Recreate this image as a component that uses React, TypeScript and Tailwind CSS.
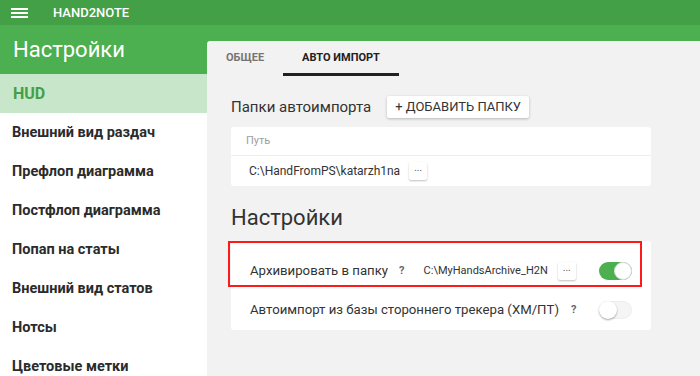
import React from 'react'

const menu = [
  'Внешний вид раздач',
  'Префлоп диаграмма',
  'Постфлоп диаграмма',
  'Попап на статы',
  'Внешний вид статов',
  'Нотсы',
  'Цветовые метки',
]

function Dots() {
  return (
    <button className="w-[18px] h-[18px] bg-white rounded-[2px] shadow-[0_1px_2px_rgba(0,0,0,0.25)] text-[10px] leading-[18px] text-[#555] flex items-end justify-center pb-[3px]">
      ...
    </button>
  )
}

function Toggle({ on }: { on: boolean }) {
  return (
    <div
      className={
        on
          ? 'relative w-[33px] h-[18px] rounded-full bg-[#4caf50]'
          : 'relative w-[33px] h-[18px] rounded-full bg-[#f5f5f5] border border-[#eeeeee]'
      }
    >
      <div
        className={
          on
            ? 'absolute top-0 right-0 w-[18px] h-[18px] rounded-full bg-white border border-[#dddddd]'
            : 'absolute top-[-1px] left-[-1px] w-[18px] h-[18px] rounded-full bg-white shadow-[0_1px_2px_rgba(0,0,0,0.35)]'
        }
      />
    </div>
  )
}

export default function App() {
  return (
    <div className="w-[700px] h-[376px] overflow-hidden bg-white font-['Roboto',sans-serif] flex flex-col">
      {/* top bar */}
      <div className="h-[25px] shrink-0 bg-[#43a047] flex items-center">
        <div className="ml-[11px] w-[17px] flex flex-col gap-[2px]">
          <span className="block h-[2px] bg-white" />
          <span className="block h-[2px] bg-white" />
          <span className="block h-[2px] bg-white" />
        </div>
        <span className="ml-[25px] text-white text-[13px] font-medium">HAND2NOTE</span>
      </div>

      <div className="h-[49px] shrink-0 bg-[#4caf50] flex items-center">
        <h1 className="ml-[13px] text-white text-[22px] leading-none">Настройки</h1>
      </div>

      <div className="flex flex-1 min-h-0">
        {/* sidebar */}
        <div className="w-[207px] shrink-0">
          <div className="h-[39px] bg-[#c8e6c9] flex items-center pl-[13px] text-[#43a047] text-[16px] font-bold">
            HUD
          </div>
          {menu.map((m) => (
            <div key={m} className="h-[39px] flex items-center pl-[12px] text-[14.5px] font-bold text-[#2b2b2b] whitespace-nowrap">
              {m}
            </div>
          ))}
        </div>

        {/* panel */}
        <div className="flex-1 -mt-[33px] bg-[#f2f2f2] rounded-tl-[3px] relative">
          <div className="flex h-[35px]">
            <div className="px-[19px] flex items-center text-[11px] font-bold text-[#757575]">ОБЩЕЕ</div>
            <div className="px-[19px] flex items-center text-[11px] font-bold text-[#212121] border-b-[3px] border-[#212121] pt-[3px]">
              АВТО ИМПОРТ
            </div>
          </div>

          <div className="pl-[24px] w-[444px]">
            <div className="mt-[20px] flex items-center h-[22px]">
              <span className="text-[15px] text-[#333]">Папки автоимпорта</span>
              <button className="ml-[16px] h-[22px] px-[8px] bg-white rounded-[2px] shadow-[0_1px_3px_rgba(0,0,0,0.25)] text-[13px] text-[#333]">
                + ДОБАВИТЬ ПАПКУ
              </button>
            </div>

            <div className="mt-[9px] bg-white rounded-[3px]">
              <div className="h-[29px] flex items-center pl-[15px] text-[11px] text-[#9e9e9e] border-b border-[#eeeeee]">
                Путь
              </div>
              <div className="h-[30px] flex items-center pl-[18px] text-[12px] text-[#333]">
                <span>C:\HandFromPS\katarzh1na</span>
                <span className="ml-[9px]">
                  <Dots />
                </span>
              </div>
            </div>

            <h2 className="mt-[19px] text-[22px] text-[#333] leading-[26px]">Настройки</h2>

            <div className="mt-[10px] bg-white rounded-[3px] relative pb-[9px]">
              <div className="absolute left-[-3px] top-0 w-[414px] h-[46px] border-2 border-[#ff1a1a]" />
              <div className="h-[58px] flex items-center pl-[19px] pr-[19px] pt-[2px]">
                <span className="text-[13.2px] text-[#333]">Архивировать в папку</span>
                <span className="ml-[11px] text-[11px] font-bold text-[#666]">?</span>
                <span className="ml-[19px] text-[11px] text-[#333]">C:\MyHandsArchive_H2N</span>
                <span className="ml-[10px]">
                  <Dots />
                </span>
                <div className="ml-auto">
                  <Toggle on />
                </div>
              </div>
              <div className="h-[22px] flex items-center pl-[19px] pr-[19px]">
                <span className="text-[13.2px] text-[#333]">Автоимпорт из базы стороннего трекера (ХМ/ПТ)</span>
                <span className="ml-[12px] text-[11px] font-bold text-[#666]">?</span>
                <div className="ml-auto">
                  <Toggle on={false} />
                </div>
              </div>
            </div>
          </div>
        </div>
      </div>
    </div>
  )
}
